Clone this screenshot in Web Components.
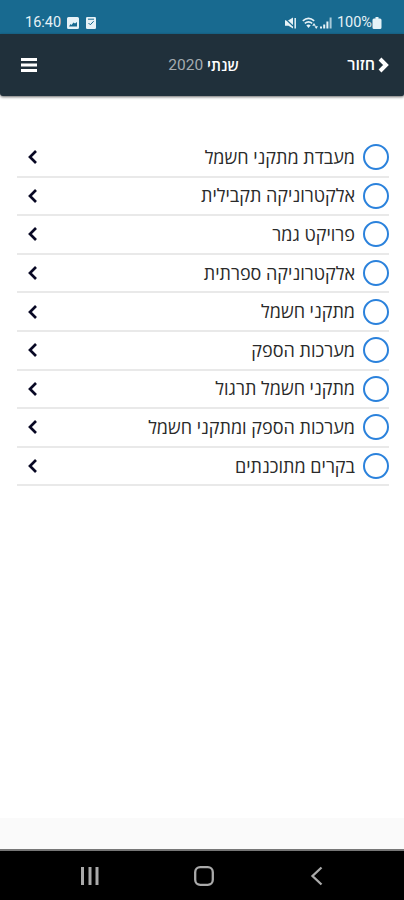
<!DOCTYPE html>
<html lang="he">
<head>
<meta charset="utf-8">
<meta name="viewport" content="width=device-width, initial-scale=1">
<title>שנתי 2020</title>
<style>
  body {
    margin: 0;
    background: #fff;
    font-family: "Open Sans", "Noto Sans", sans-serif;
  }
</style>
</head>
<body>
<course-app></course-app>

<script>
const statusBar = document.createElement('template');

statusBar.innerHTML = /* html */ `
  <style>
    :host {
      display: flex;
      box-sizing: border-box;
      height: 34px;
      padding: 14px 22px 0 25px;
      justify-content: space-between;
      background: #186a90;
      color: #e6f2f7;
      font: 14.5px/20px Roboto, sans-serif;
    }
    .group {
      display: flex;
      height: 18px;
      align-items: center;
    }
    svg {
      display: block;
      fill: currentColor;
    }
    .picture { margin-left: 6px; }
    .check { margin-left: 7px; }
    .wifi { margin-left: 5px; }
    .signal { margin: 0 5px 0 2px; }
  </style>
  <div class="group">
    <span>16:40</span>
    <svg class="picture" width="12" height="12" viewBox="0 0 12 12">
      <path fill-rule="evenodd" d="M1.500 0h9Q12 0 12 1.500v9Q12 12 10.500 12h-9Q0 12 0 10.500v-9Q0 0 1.500 0zM2 9.500h8V5L8 6.500 6.500 5.500 4.500 8 3.500 7z"/>
    </svg>
    <svg class="check" width="10" height="12" viewBox="0 0 10 12">
      <rect width="10" height="12" rx="1.300"/>
      <path d="M2.500 6l1.800 1.800 3.400-3.600M2 2.200h6" fill="none" stroke="#186a90"/>
    </svg>
  </div>
  <div class="group">
    <svg width="13" height="12" viewBox="0 0 13 12">
      <path d="M1 3.300h3.500L9 .500v11L4.500 8.700H1z"/>
      <path d="M0 .500l9 8.500" stroke="#186a90" stroke-width="1.100"/>
      <path d="M11.200 1v10.500" stroke="currentColor" stroke-width="1.500"/>
    </svg>
    <svg class="wifi" width="16" height="12" viewBox="0 0 16 12">
      <path d="M.800 3.800q5.700-5 11.400 0M2.800 6.400q3.700-3 7.400 0" fill="none" stroke="currentColor" stroke-width="1.600"/>
      <path d="M4.300 8.300q2.200-1.700 4.400 0L6.500 11zM12 6l1.800 2.700h-3.600zM12.500 9.300H16L14.200 12z"/>
    </svg>
    <svg class="signal" width="12" height="12" viewBox="0 0 12 12">
      <path d="M0 9.500h2v2H0zM3.200 7.500h2v4h-2zM6.400 4.500h2v7h-2z"/>
      <path d="M9.600.500h2v11h-2z" opacity=".7"/>
    </svg>
    <span>100%</span>
    <svg width="10" height="12" viewBox="0 0 10 12">
      <path d="M3.500 0h3v1.500H8Q9.500 1.500 9.500 3v7.500Q9.500 12 8 12H2Q.500 12 .500 10.500V3Q.500 1.500 2 1.500h1.500z"/>
    </svg>
  </div>
`;

class StatusBar extends HTMLElement {
  constructor() {
    super();
    this.attachShadow({ mode: 'open' });
    this.shadowRoot.appendChild(statusBar.content.cloneNode(true));
  }
}
window.customElements.define('status-bar', StatusBar);

const appHeader = document.createElement('template');

appHeader.innerHTML = /* html */ `
  <style>
    :host {
      display: grid;
      grid-template-columns: 1fr auto 1fr;
      align-items: center;
      box-sizing: border-box;
      height: 62px;
      padding: 0 15px 1px 18px;
      background: #20303b;
      border-radius: 0 0 2px 3px;
      box-shadow: 0 1px 3px rgba(0, 0, 0, .6);
      color: #fff;
      font-size: 16px;
      line-height: 22px;
    }
    svg {
      display: block;
    }
    .menu {
      margin-left: 3px;
    }
    .back {
      display: flex;
      justify-content: flex-end;
      align-items: center;
      gap: 3px;
      font-weight: 600;
    }
    .back slot {
      display: block;
      margin-top: -2px;
    }
  </style>
  <svg class="menu" width="16" height="14" viewBox="0 0 16 14" fill="#fff">
    <rect width="16" height="3"/>
    <rect y="5.500" width="16" height="3"/>
    <rect y="11" width="16" height="3"/>
  </svg>
  <slot name="title"></slot>
  <div class="back">
    <slot name="back"></slot>
    <svg width="11" height="16" viewBox="0 0 11 16" fill="none" stroke="#fff" stroke-width="4">
      <path d="M2 2l6 6-6 6"/>
    </svg>
  </div>
`;

class AppHeader extends HTMLElement {
  constructor() {
    super();
    this.attachShadow({ mode: 'open' });
    this.shadowRoot.appendChild(appHeader.content.cloneNode(true));
  }
}
window.customElements.define('app-header', AppHeader);

const courseRow = document.createElement('template');

courseRow.innerHTML = /* html */ `
  <style>
    :host {
      display: flex;
      direction: rtl;
      align-items: center;
      box-sizing: border-box;
      height: 38.6px;
      border-bottom: 2px solid #e9e9e9;
      color: #2a2a2a;
      font-size: 18px;
      line-height: 24px;
      white-space: nowrap;
    }
    .radio {
      box-sizing: border-box;
      width: 26px;
      height: 26px;
      border: 2px solid #2b82dc;
      border-radius: 50%;
    }
    .name {
      flex: 1;
      margin: -1px 8px 0 0;
    }
    svg {
      display: block;
      margin-left: 11px;
    }
  </style>
  <span class="radio"></span>
  <span class="name"><slot></slot></span>
  <svg width="10" height="14" viewBox="0 0 10 14" fill="none" stroke="#080824" stroke-width="2.700">
    <path d="M8 1L2 7l6 6"/>
  </svg>
`;

class CourseRow extends HTMLElement {
  constructor() {
    super();
    this.attachShadow({ mode: 'open' });
    this.shadowRoot.appendChild(courseRow.content.cloneNode(true));
  }
}
window.customElements.define('course-row', CourseRow);

const navButtons = document.createElement('template');

navButtons.innerHTML = /* html */ `
  <style>
    :host {
      display: flex;
      box-sizing: border-box;
      height: 51px;
      padding: 0 77px 0 80px;
      align-items: center;
      justify-content: space-between;
      border-top: 2px solid #777;
      background: #000;
    }
    svg {
      display: block;
      fill: none;
      stroke: #aaa;
      stroke-width: 2.300;
    }
  </style>
  <svg width="20" height="20" viewBox="0 0 20 20"><path d="M2.500 1v18M10 1v18M17 1v18" stroke-width="3"/></svg>
  <svg width="20" height="20" viewBox="0 0 20 20"><rect x="1.200" y="1.200" width="17.600" height="17.600" rx="5"/></svg>
  <svg width="20" height="20" viewBox="0 0 20 20"><path d="M14.500 1.500L5.500 10l9 8.500"/></svg>
`;

class NavButtons extends HTMLElement {
  constructor() {
    super();
    this.attachShadow({ mode: 'open' });
    this.shadowRoot.appendChild(navButtons.content.cloneNode(true));
  }
}
window.customElements.define('nav-buttons', NavButtons);

const courseApp = document.createElement('template');

courseApp.innerHTML = /* html */ `
  <style>
    :host {
      display: flex;
      flex-direction: column;
      height: 900px;
      overflow: hidden;
    }
    main {
      flex: 1;
      padding: 43px 15px 0 17px;
    }
    footer {
      height: 31px;
      background: #fafafa;
    }
    .title {
      display: flex;
      direction: rtl;
      align-items: center;
      gap: 4px;
      font-size: 15px;
      font-weight: 600;
    }
    .year {
      color: #a4abb0;
      font: 15.500px/22px Roboto, sans-serif;
    }
  </style>
  <status-bar></status-bar>
  <app-header>
    <span class="title" slot="title"><span>שנתי</span><span class="year">2020</span></span>
    <span slot="back">חזור</span>
  </app-header>
  <main>
    <course-row>מעבדת מתקני חשמל</course-row>
    <course-row>אלקטרוניקה תקבילית</course-row>
    <course-row>פרויקט גמר</course-row>
    <course-row>אלקטרוניקה ספרתית</course-row>
    <course-row>מתקני חשמל</course-row>
    <course-row>מערכות הספק</course-row>
    <course-row>מתקני חשמל תרגול</course-row>
    <course-row>מערכות הספק ומתקני חשמל</course-row>
    <course-row>בקרים מתוכנתים</course-row>
  </main>
  <footer></footer>
  <nav-buttons></nav-buttons>
`;

class CourseApp extends HTMLElement {
  constructor() {
    super();
    this.attachShadow({ mode: 'open' });
    this.shadowRoot.appendChild(courseApp.content.cloneNode(true));
  }
}
window.customElements.define('course-app', CourseApp);
</script>
</body>
</html>
